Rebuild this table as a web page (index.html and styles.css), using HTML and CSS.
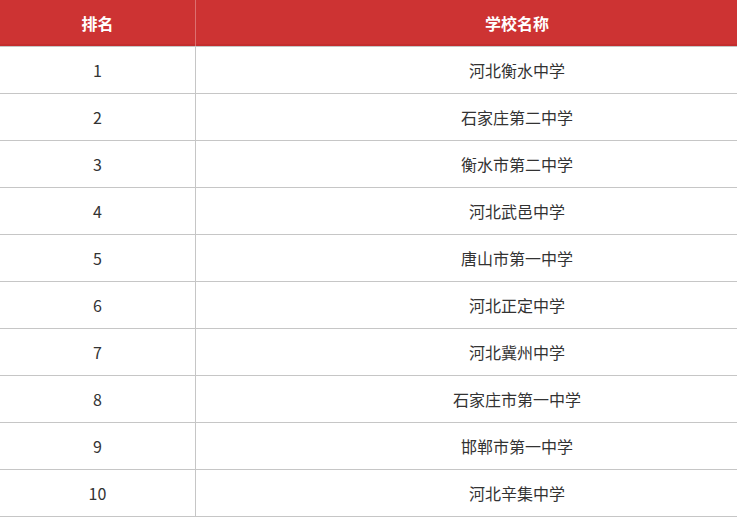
FILE: index.html
```html
<!DOCTYPE html>
<html lang="zh">
<head>
<meta charset="utf-8">
<link rel="stylesheet" href="styles.css">
</head>
<body>
<table class="rank">
  <thead>
    <tr><th class="c1">排名</th><th class="c2">学校名称</th></tr>
  </thead>
  <tbody>
    <tr><td class="c1">1</td><td class="c2">河北衡水中学</td></tr>
    <tr><td class="c1">2</td><td class="c2">石家庄第二中学</td></tr>
    <tr><td class="c1">3</td><td class="c2">衡水市第二中学</td></tr>
    <tr><td class="c1">4</td><td class="c2">河北武邑中学</td></tr>
    <tr><td class="c1">5</td><td class="c2">唐山市第一中学</td></tr>
    <tr><td class="c1">6</td><td class="c2">河北正定中学</td></tr>
    <tr><td class="c1">7</td><td class="c2">河北冀州中学</td></tr>
    <tr><td class="c1">8</td><td class="c2">石家庄市第一中学</td></tr>
    <tr><td class="c1">9</td><td class="c2">邯郸市第一中学</td></tr>
    <tr><td class="c1">10</td><td class="c2">河北辛集中学</td></tr>
  </tbody>
</table>
</body>
</html>
```
FILE: styles.css
```css
html, body {
  margin: 0;
  padding: 0;
  overflow: hidden;
  background: #fff;
}
body {
  width: 737px;
  height: 517px;
  font-family: "Noto Sans CJK SC", "Microsoft YaHei", sans-serif;
}
.rank {
  border-collapse: collapse;
  width: 737px;
  table-layout: fixed;
}
.rank th, .rank td {
  padding: 0;
  text-align: center;
  font-size: 16px;
  line-height: 20px;
  border-bottom: 1px solid #c6c6c6;
}
.rank th {
  height: 46px;
  background: #cd3333;
  box-shadow: inset 0 -2px 0 #c42d2e;
  color: #fff;
  font-weight: bold;
}
.rank td {
  height: 46px;
  color: #333;
}
.c1 {
  width: 195px;
  border-right: 1px solid #c6c6c6;
}
.rank .c2 {
  padding-left: 101px;
}
.rank th.c1 {
  border-right-color: #dc7070;
}
```
